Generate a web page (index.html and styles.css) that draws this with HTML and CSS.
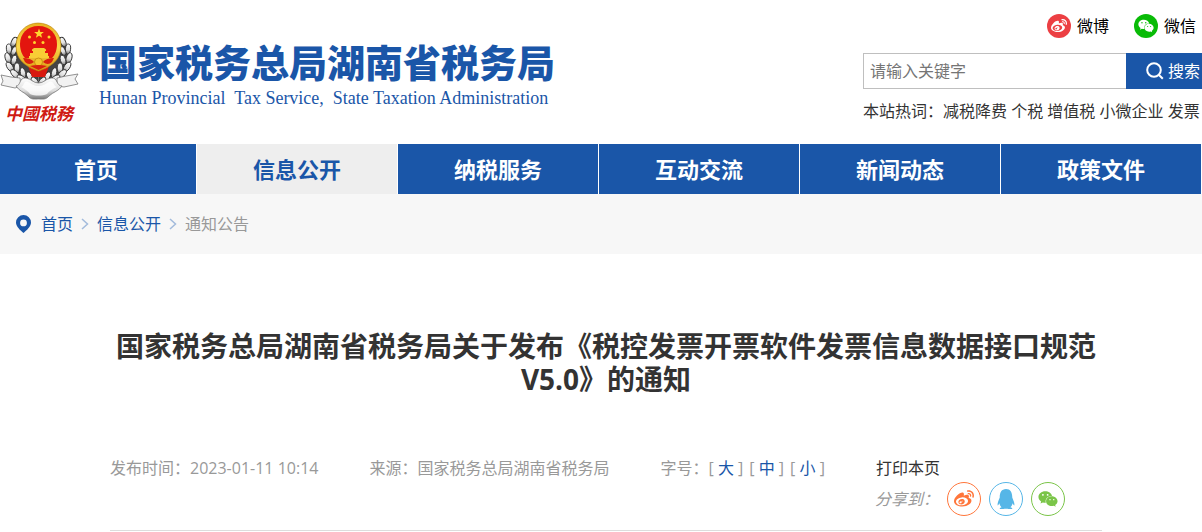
FILE: index.html
```html
<!DOCTYPE html>
<html lang="zh-CN">
<head>
<meta charset="utf-8">
<title>国家税务总局湖南省税务局</title>
<link rel="stylesheet" href="styles.css">
</head>
<body>
<svg class="sprite" aria-hidden="true">
  <symbol id="weibo" viewBox="0 0 512 512"><path d="M407 177.6c7.6-24-13.4-46.8-37.4-41.7-22 4.8-28.8-28.1-7.1-32.8 50.1-10.9 92.3 37.1 76.5 84.8-6.8 21.2-38.8 10.8-32-10.3zM214.8 446.7C108.5 446.7 0 395.3 0 310.4c0-44.3 28-95.4 76.3-143.7C176 67 279.5 65.8 249.9 161c-4 13.1 12.3 5.7 12.3 6 79.5-33.6 140.5-16.8 114 51.4-3.7 9.4 1.1 10.9 8.3 13.1 135.7 42.3 34.8 215.2-169.7 215.2zm143.7-146.3c-5.4-55.7-78.5-94-163.4-85.7-84.8 8.6-148.8 60.3-143.4 116s78.5 94 163.4 85.7c84.8-8.6 148.8-60.3 143.4-116zM347.9 35.1c-25.9 5.6-16.8 43.7 8.3 38.3 72.3-15.2 134.8 52.8 111.7 124-7.4 24.2 29.1 37 37.4 12 31.9-99.8-55.1-195.9-157.4-174.3zm-78.5 311c-17.1 38.8-66.8 60-109.1 46.3-40.8-13.1-58-53.4-40.3-89.7 17.7-35.4 63.1-55.4 103.4-45.1 42 10.8 63.1 50.2 46 88.5zm-86.3-30c-12.9-5.4-30 .3-38 12.9-8.3 12.9-4.3 28 8.6 34 13.1 6 30.8.3 39.1-12.9 8-13.1 3.7-28.3-9.7-34zm32.6-13.4c-5.1-1.7-11.4.6-14.3 5.4-2.9 5.1-1.4 10.6 3.7 12.9 5.1 2 11.7-.3 14.6-5.4 2.8-5.2 1.1-10.9-4-12.9z"/></symbol>
  <symbol id="wechat" viewBox="0 0 576 512"><path d="M385.2 167.6c6.4 0 12.6.3 18.8 1.1C387.4 90.3 303.3 32 207.7 32 100.5 32 13 104.8 13 197.4c0 53.4 29.3 97.5 77.9 131.6l-19.3 58.6 68-34.1c24.4 4.8 43.8 9.7 68.2 9.7 6.2 0 12.1-.3 18.3-.8-4-12.9-6.2-26.6-6.2-40.8-.1-84.9 72.9-154 165.3-154zm-104.5-52.9c14.5 0 24.2 9.7 24.2 24.4 0 14.5-9.7 24.2-24.2 24.2-14.8 0-29.3-9.7-29.3-24.2.1-14.7 14.6-24.4 29.3-24.4zm-136.4 48.6c-14.5 0-29.3-9.7-29.3-24.2 0-14.8 14.8-24.4 29.3-24.4 14.8 0 24.4 9.7 24.4 24.4 0 14.6-9.6 24.2-24.4 24.2zM563 319.4c0-77.9-77.9-141.3-165.4-141.3-92.7 0-165.4 63.4-165.4 141.3S305 460.7 397.6 460.7c19.3 0 38.9-5.1 58.6-9.9l53.4 29.3-14.8-48.6C534 402.1 563 363.2 563 319.4zm-219.1-24.5c-9.7 0-19.3-9.7-19.3-19.6 0-9.7 9.7-19.3 19.3-19.3 14.8 0 24.4 9.7 24.4 19.3 0 10-9.7 19.6-24.4 19.6zm107.1 0c-9.7 0-19.3-9.7-19.3-19.6 0-9.7 9.7-19.3 19.3-19.3 14.5 0 24.4 9.7 24.4 19.3.1 10-9.9 19.6-24.4 19.6z"/></symbol>
  <symbol id="qq" viewBox="0 0 448 512"><path d="M433.754 420.445c-11.526 1.393-44.86-52.741-44.86-52.741 0 31.345-16.136 72.247-51.051 101.786 16.842 5.192 54.843 19.167 45.803 34.421-7.316 12.343-125.51 7.881-159.632 4.037-34.122 3.844-152.316 8.306-159.632-4.037-9.045-15.25 28.918-29.214 45.783-34.415-34.92-29.539-51.059-70.445-51.059-101.792 0 0-33.334 54.134-44.859 52.741-5.37-.65-12.424-29.644 9.347-99.704 10.261-33.024 21.995-60.478 40.144-105.779C60.683 98.063 108.982.006 224 0c113.737.006 163.156 96.133 160.264 214.963 18.118 45.223 29.912 72.85 40.144 105.778 21.768 70.06 14.716 99.053 9.346 99.704z"/></symbol>
</svg>

<header class="header">
  <a class="brand" href="#">
    <span class="emblem">
      <svg class="emblem-art" viewBox="0 22 80 80" aria-hidden="true">
        <defs>
          <linearGradient id="silver" x1="0" y1="0" x2="0" y2="1">
            <stop offset="0" stop-color="#fff"/><stop offset=".6" stop-color="#ddd"/><stop offset="1" stop-color="#777"/>
          </linearGradient>
          <linearGradient id="gold" x1="0" y1="0" x2="0" y2="1">
            <stop offset="0" stop-color="#e9b020"/><stop offset=".5" stop-color="#f9d84c"/><stop offset="1" stop-color="#dc9a10"/>
          </linearGradient>
          <g id="wreath" fill="url(#silver)" stroke="#333" stroke-width=".9">
            <path d="M17 37C5 48 5 70 20 83l18 4V60z" fill="#444"/>
            <ellipse cx="14" cy="42" rx="2.6" ry="5" transform="rotate(24 14 42)"/>
            <ellipse cx="9" cy="49" rx="2.6" ry="5" transform="rotate(-6 9 49)"/>
            <ellipse cx="14" cy="51" rx="2.4" ry="4.6" transform="rotate(24 14 51)"/>
            <ellipse cx="8" cy="58" rx="2.8" ry="5.4" transform="rotate(-18 8 58)"/>
            <ellipse cx="14" cy="60" rx="2.6" ry="5" transform="rotate(14 14 60)"/>
            <ellipse cx="10" cy="67" rx="2.8" ry="5.6" transform="rotate(-34 10 67)"/>
            <ellipse cx="17" cy="68" rx="2.8" ry="5.2" transform="rotate(0 17 68)"/>
            <ellipse cx="15" cy="74" rx="2.8" ry="5.6" transform="rotate(-46 15 74)"/>
            <ellipse cx="23" cy="73" rx="2.6" ry="5.4" transform="rotate(-14 23 73)"/>
            <ellipse cx="22" cy="79" rx="2.8" ry="5.6" transform="rotate(-52 22 79)"/>
            <ellipse cx="30" cy="77" rx="2.6" ry="5.6" transform="rotate(-28 30 77)"/>
            <ellipse cx="35" cy="81" rx="2.4" ry="5" transform="rotate(-44 35 81)"/>
          </g>
        </defs>
        <use href="#wreath"/>
        <use href="#wreath" transform="translate(77 0) scale(-1 1)"/>
        <path d="M28 66h21l-4 11H32z" fill="#d8180f"/>
        <path d="M38 23C51 23 61 33 61 46c0 14-10 21-22.500 25C26 67 16 60 16 46 16 33 26 23 38 23z" fill="url(#gold)" stroke="#b98512" stroke-width=".6"/>
        <path d="M38.500 26C50 26 57 34 57 44c0 6-2 11-5 14H25c-3-3-5-8-5-14 0-10 7-18 18.500-18z" fill="#e3150f"/>
        <path d="M39 28.500l1.300 3.400 3.600.1-2.800 2.200 1 3.500-3.100-2-3.100 2 1-3.500-2.800-2.200 3.600-.1z" fill="#ffd52e"/>
        <g fill="#ffd52e"><circle cx="29.500" cy="37" r="1.500"/><circle cx="49" cy="37" r="1.500"/><circle cx="34.500" cy="42.500" r="1.500"/><circle cx="43" cy="42.500" r="1.500"/></g>
        <path d="M32 49.500l2-1.500h10l2 1.500V51h-1v2h3v3h1v2H29v-2h1v-3h3v-2h-1z" fill="#f8ce35"/>
        <path d="M23 58q8 0 11 4-5 4-9 0zM54 58q-8 0-11 4 5 4 9 0z" fill="#d8200f"/>
        <circle cx="38.500" cy="62" r="4" fill="#f4c52e" stroke="#bd7c0b" stroke-width=".7"/>
        <path d="M30 66q8-2 17 0l-8.500 4z" fill="#d8200f"/>
        <g stroke="#777" stroke-width=".8">
          <path d="M20 78l-9-1-10-2 2 6-2 4 14 3 6-2z" fill="#f2f2f2"/>
          <path d="M57 78l9-2 12-2-3 5 3 5-14 3-7-1z" fill="#f2f2f2"/>
          <path d="M16 86c5 0 3-9 10-8 6 1 7 5 12.500 5S45 79 51 78c7-1 5 8 11 8-3 5-9 6-13 10-3 4-7 3-10.500 3S31 100 28 96c-4-4-9-5-12-10z" fill="url(#silver)"/>
        </g>
        <path d="M21 87c4-1 2-7 7-5 4 2 6 4 10.500 4S45 84 49 82c5-2 4 4 8 5-5 2-8 4-10 7-5 2-12 2-17 0-2-3-5-5-9-7z" fill="#fff" opacity=".8"/>
      </svg>
      <span class="emblem-name">中國税務</span>
    </span>
    <span class="brand-text">
      <span class="brand-cn">国家税务总局湖南省税务局</span>
      <span class="brand-en">Hunan Provincial  Tax Service,  State Taxation Administration</span>
    </span>
  </a>

  <div class="tools">
    <div class="social">
      <a href="#"><span class="badge badge-weibo"><svg><use href="#weibo"/></svg></span>微博</a>
      <a href="#"><span class="badge badge-wechat"><svg><use href="#wechat"/></svg></span>微信</a>
    </div>
    <form class="search">
      <input type="text" placeholder="请输入关键字" aria-label="请输入关键字">
      <button type="button"><svg viewBox="0 0 18 18" aria-hidden="true"><circle cx="8" cy="8" r="6.800"/><path d="M13 13l3.800 3.800"/></svg>搜索</button>
    </form>
    <div class="hot">本站热词：<a href="#">减税降费</a> <a href="#">个税</a> <a href="#">增值税</a> <a href="#">小微企业</a> <a href="#">发票</a></div>
  </div>
</header>

<nav class="nav">
  <a href="#">首页</a>
  <a class="active" href="#">信息公开</a>
  <a href="#">纳税服务</a>
  <a href="#">互动交流</a>
  <a href="#">新闻动态</a>
  <a href="#">政策文件</a>
</nav>

<div class="crumbs">
  <svg class="pin" viewBox="0 0 15 18" aria-hidden="true"><path fill-rule="evenodd" d="M7.500 0A7.500 7.500 0 0 1 15 7.500C15 11.500 10.500 15.500 7.500 18 4.500 15.500 0 11.500 0 7.500A7.500 7.500 0 0 1 7.500 0zm0 4.500a3.400 3.400 0 1 0 0 6.800 3.400 3.400 0 0 0 0-6.800z"/></svg>
  <a href="#">首页</a>
  <svg class="chevron" viewBox="0 0 8 12" aria-hidden="true"><path d="M1 1l5.500 5L1 11"/></svg>
  <a href="#">信息公开</a>
  <svg class="chevron" viewBox="0 0 8 12" aria-hidden="true"><path d="M1 1l5.500 5L1 11"/></svg>
  <span>通知公告</span>
</div>

<main class="article">
  <h1>国家税务总局湖南省税务局关于发布《税控发票开票软件发票信息数据接口规范V5.0》的通知</h1>
  <div class="meta">
    <span>发布时间：2023-01-11 10:14</span>
    <span>来源：国家税务总局湖南省税务局</span>
    <span class="sizes">字号：<span>[ <button type="button">大</button> ]</span><span>[ <button type="button">中</button> ]</span><span>[ <button type="button">小</button> ]</span></span>
    <a href="#">打印本页</a>
  </div>
  <div class="share">
    <em>分享到：</em>
    <a class="share-weibo" href="#" aria-label="微博"><svg><use href="#weibo"/></svg></a>
    <a class="share-qq" href="#" aria-label="QQ"><svg><use href="#qq"/></svg></a>
    <a class="share-wechat" href="#" aria-label="微信"><svg><use href="#wechat"/></svg></a>
  </div>
</main>
</body>
</html>
```

FILE: styles.css
```css
* { box-sizing: border-box; }

body {
  margin: 0;
  overflow-x: hidden;
  background: #fff;
  color: #333;
  font: 16px/24px "Open Sans", "Noto Sans CJK SC", sans-serif;
}

a { color: inherit; text-decoration: none; }

button {
  padding: 0;
  border: 0;
  background: none;
  font: inherit;
  cursor: pointer;
}

svg { display: block; fill: currentColor; }

.sprite { display: none; }

/* Header */
.header {
  display: flex;
  justify-content: space-between;
  padding-bottom: 18px;
}

.brand { display: flex; padding-top: 22px; }

.emblem { width: 80px; }

.emblem-art { width: 80px; height: 80px; }

.emblem-name {
  display: block;
  padding-left: 5px;
  color: #cf1a14;
  font-size: 17px;
  font-style: italic;
  font-weight: 700;
  line-height: 24px;
}

.brand-text {
  display: flex;
  flex-direction: column;
  padding: 18px 0 0 19px;
  color: #1a56a8;
  white-space: pre;
}

.brand-cn { font-size: 38px; font-weight: 900; line-height: 44px; }

.brand-en { font-family: "Liberation Serif", serif; font-size: 18px; line-height: 28px; }

.tools { flex: none; width: 339px; padding-top: 14px; }

.social {
  display: flex;
  justify-content: flex-end;
  gap: 25px;
  padding-right: 6px;
  color: #000;
}

.social a { display: flex; align-items: center; gap: 6px; }

.badge {
  display: grid;
  place-items: center;
  width: 24px;
  height: 24px;
  border-radius: 50%;
  color: #fff;
}

.badge svg { width: 16px; height: 16px; }
.badge-weibo { background: #ec3f43; }
.badge-wechat { background: #09bb07; }

.search { display: flex; height: 36px; margin: 15px 0 10px; }

.search input {
  flex: 1;
  min-width: 0;
  padding: 0 6px;
  border: 1px solid #bfbfbf;
  border-right: 0;
  font: inherit;
}

.search input::placeholder { color: #757575; }

.search button {
  display: flex;
  align-items: center;
  gap: 4px;
  width: 76px;
  padding-left: 20px;
  background: #1a56a8;
  color: #fff;
  white-space: nowrap;
}

.search svg {
  flex: none;
  width: 18px;
  height: 18px;
  fill: none;
  stroke: #fff;
  stroke-width: 2;
}

.hot { white-space: nowrap; }

/* Main navigation */
.nav {
  display: grid;
  grid-template-columns: repeat(6, 1fr);
  margin-left: -4px;
}

.nav a {
  border-right: 1px solid #fff;
  background: #1a56a8;
  color: #fff;
  font-size: 22px;
  font-weight: 700;
  line-height: 50px;
  text-align: center;
}

.nav .active { background: #eee; color: #1a56a8; }

/* Breadcrumbs */
.crumbs {
  display: flex;
  align-items: center;
  gap: 8px;
  padding: 18px 16px;
  background: #f7f7f7;
  color: #1a56a8;
}

.crumbs span { color: #999; }

.pin { width: 15px; height: 18px; margin-right: 2px; }

.chevron {
  width: 8px;
  height: 12px;
  fill: none;
  stroke: #a3bbdc;
  stroke-width: 1.5;
}

/* Article heading */
.article {
  margin: 0 100px 0 110px;
  padding: 76px 0 14px;
  border-bottom: 1px solid #ddd;
}

h1 {
  margin: 0 0 60px;
  font-size: 28px;
  line-height: 33px;
  text-align: center;
}

.meta {
  display: flex;
  gap: 51px;
  color: #999;
  white-space: nowrap;
}

.meta a { color: #333; }

.sizes { display: flex; }
.sizes span + span { margin-left: 6px; }
.sizes button { color: #1a56a8; }

.share {
  display: flex;
  align-items: center;
  justify-content: flex-end;
  gap: 8px;
  margin-top: 2px;
  padding-right: 37px;
  color: #999;
}

.share a {
  display: grid;
  place-items: center;
  width: 34px;
  height: 34px;
  border: 1px solid currentColor;
  border-radius: 50%;
}

.share svg { width: 20px; height: 20px; }
.share-weibo { color: #ff763b; }
.share-qq { color: #56b6e7; }
.share-wechat { color: #7bc549; }
```
